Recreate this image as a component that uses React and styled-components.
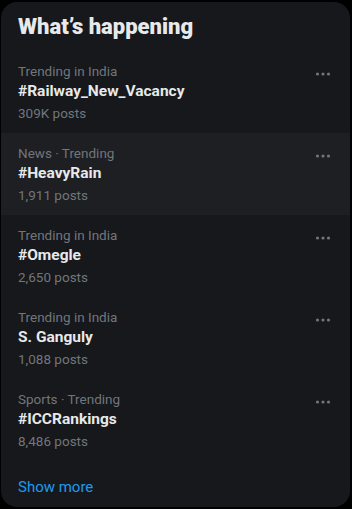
import React from 'react';
import styled, { createGlobalStyle } from 'styled-components';

const GlobalStyle = createGlobalStyle`
  body {
    margin: 0;
    background: #000;
    font-family: Roboto, "Noto Sans", sans-serif;
  }
`;

const trends = [
  { category: 'Trending in India', title: '#Railway_New_Vacancy', posts: '309K posts' },
  { category: 'News · Trending', title: '#HeavyRain', posts: '1,911 posts', hover: true },
  { category: 'Trending in India', title: '#Omegle', posts: '2,650 posts' },
  { category: 'Trending in India', title: 'S. Ganguly', posts: '1,088 posts' },
  { category: 'Sports · Trending', title: '#ICCRankings', posts: '8,486 posts' },
];

const Page = styled.div`
  padding: 2px 2px 2px 1px;
`;

const Card = styled.section`
  width: 349px;
  background: #16181c;
  border-radius: 16px;
  overflow: hidden;
`;

const Heading = styled.h2`
  margin: 0;
  padding: 13px 16px 12px 17px;
  font-size: 22px;
  line-height: 24px;
  font-weight: 900;
  color: #e7e9ea;
`;

const Row = styled.div`
  display: flex;
  justify-content: space-between;
  align-items: flex-start;
  height: 82px;
  box-sizing: border-box;
  padding: 12px 16px 12px 17px;
  background: ${(p) => (p.$hover ? '#1d1f23' : 'transparent')};
`;

const Info = styled.div`
  display: flex;
  flex-direction: column;
`;

const Meta = styled.span`
  font-size: 13.5px;
  line-height: 16px;
  color: #71767b;
`;

const Title = styled.span`
  margin-top: 2px;
  font-size: 15.5px;
  line-height: 20px;
  font-weight: 700;
  color: #e7e9ea;
`;

const Posts = styled(Meta)`
  margin-top: 4px;
`;

const More = styled.button`
  display: flex;
  align-items: center;
  justify-content: center;
  width: 20px;
  height: 20px;
  margin-top: 1px;
  margin-right: 1px;
  padding: 0;
  border: 0;
  background: none;
  color: #71767b;
`;

const ShowMore = styled.a`
  display: block;
  padding: 18px 16px 12px 17px;
  font-size: 15px;
  line-height: 16px;
  color: #1d9bf0;
  text-decoration: none;
`;

const Dots = () => (
  <svg width="18" height="18" viewBox="0 0 18 18" fill="currentColor">
    <circle cx="3.5" cy="9" r="1.6" />
    <circle cx="9" cy="9" r="1.6" />
    <circle cx="14.5" cy="9" r="1.6" />
  </svg>
);

const App = () => {
  return (
    <Page>
      <GlobalStyle />
      <Card>
        <Heading>What’s happening</Heading>
        {trends.map((t, i) => (
          <Row key={i} $hover={t.hover}>
            <Info>
              <Meta>{t.category}</Meta>
              <Title>{t.title}</Title>
              <Posts>{t.posts}</Posts>
            </Info>
            <More aria-label="More">
              <Dots />
            </More>
          </Row>
        ))}
        <ShowMore href="#">Show more</ShowMore>
      </Card>
    </Page>
  );
};

export default App;
